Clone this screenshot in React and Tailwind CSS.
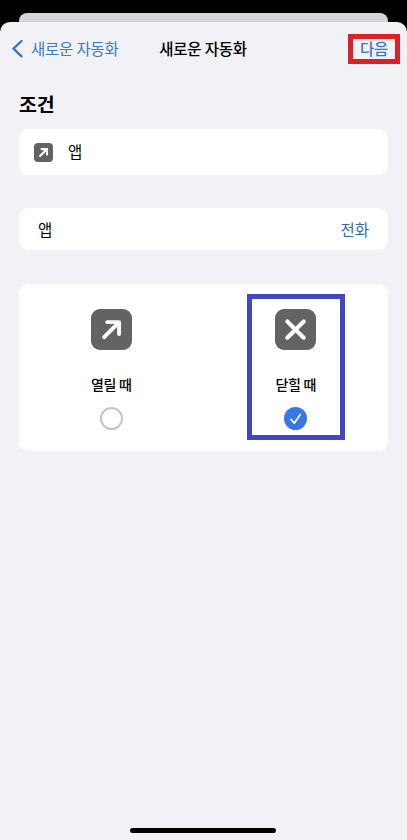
const choices = [
  { id: 'open', label: '열릴 때', checked: false, highlighted: false },
  { id: 'close', label: '닫힐 때', checked: true, highlighted: true },
];

function ArrowIcon({ className }) {
  return (
    <svg viewBox="0 0 40 40" className={className} fill="none" stroke="currentColor" strokeLinecap="round" strokeLinejoin="round">
      <path d="M12.8 27.4 L27 13.2 M15.8 12.8 H27.4 V24.4" />
    </svg>
  );
}

function CloseIcon({ className }) {
  return (
    <svg viewBox="0 0 40 40" className={className} fill="none" stroke="currentColor" strokeLinecap="round">
      <path d="M12 12.2 L28 28 M28 12.2 L12 28" />
    </svg>
  );
}

function Radio({ checked }) {
  if (!checked) {
    return <span className="block size-[23px] rounded-full border-2 border-[#c4c4c7]" />;
  }
  return (
    <span className="block size-[23px] rounded-full bg-[#3478e8]">
      <svg viewBox="0 0 23 23" className="size-full" fill="none" stroke="white" strokeWidth="1.7" strokeLinecap="round" strokeLinejoin="round">
        <path d="M7 12.4 L10.3 16.2 L16.3 7.4" />
      </svg>
    </span>
  );
}

function Choice({ choice }) {
  return (
    <div className="flex flex-1 justify-center pt-[10px]">
      <div className={`flex h-[146px] w-[98px] flex-col items-center border-5 pt-[10px] ${choice.highlighted ? 'border-[#4046c4]' : 'border-transparent'}`}>
        <span className="block size-[41px] rounded-[9px] bg-[#636366] text-white">
          {choice.id === 'open' ? <ArrowIcon className="size-full stroke-[3.8]" /> : <CloseIcon className="size-full stroke-4" />}
        </span>
        <span className="mt-6 text-[14px] leading-5 font-medium tracking-[-0.3px] whitespace-nowrap">{choice.label}</span>
        <span className="mt-[13px]">
          <Radio checked={choice.checked} />
        </span>
      </div>
    </div>
  );
}

export default function App() {
  return (
    <div className="flex h-[840px] w-[407px] flex-col overflow-hidden bg-black pt-[13px] font-['Noto_Sans_CJK_KR',sans-serif] text-black">
      {/* edge of the sheet underneath */}
      <div className="mx-[19px] h-[9px] shrink-0 rounded-t-[8px] bg-[#d5d5d9]" />

      <div className="flex flex-1 flex-col rounded-t-[10px] bg-[#f1f1f6]">
        <header className="flex h-[54px] items-center justify-between pr-[7px] pl-[12px]">
          <div className="flex w-[142px] items-center text-[#3b7cc4]">
            <svg viewBox="0 0 11 18" className="h-[18px] w-[11px]" fill="none" stroke="#3478c8" strokeWidth="2.3" strokeLinecap="round" strokeLinejoin="round">
              <path d="M9.5 1 L1.5 8.7 L9.5 16.4" />
            </svg>
            <span className="ml-[8px] text-[15.5px] tracking-[-0.2px] whitespace-nowrap">새로운 자동화</span>
          </div>
          <h1 className="text-[15.5px] font-medium tracking-[-0.2px] whitespace-nowrap">새로운 자동화</h1>
          <div className="flex w-[148px] justify-end">
            <button className="flex h-[30px] w-[52px] items-center justify-center border-5 border-[#dc2028] pb-0.5 text-[15.5px] leading-5 font-medium tracking-[-0.2px] text-[#3b78bd]">다음</button>
          </div>
        </header>

        <main className="px-[19px]">
          <h2 className="mt-[14px] text-[19.5px] leading-7 font-bold tracking-[-0.2px]">조건</h2>

          <section className="mt-[11px] flex h-[46px] items-center rounded-[9px] bg-white pl-[15px]">
            <span className="block size-[19px] rounded-[4px] bg-[#636366] text-white">
              <ArrowIcon className="size-full stroke-[4.4]" />
            </span>
            <span className="ml-[15px] text-[15.5px]">앱</span>
          </section>

          <section className="mt-[33px] flex h-[42px] items-center justify-between rounded-[9px] bg-white px-[19px] pt-0.5 text-[15.5px]">
            <span>앱</span>
            <span className="text-[#33709f]">전화</span>
          </section>

          <section className="mt-[34px] flex h-[167px] rounded-[9px] bg-white">
            {choices.map((choice) => (
              <Choice key={choice.id} choice={choice} />
            ))}
          </section>
        </main>

        <div className="mt-auto mb-[7px] ml-[130px] h-[5px] w-[146px] rounded-full bg-black" />
      </div>
    </div>
  );
}
